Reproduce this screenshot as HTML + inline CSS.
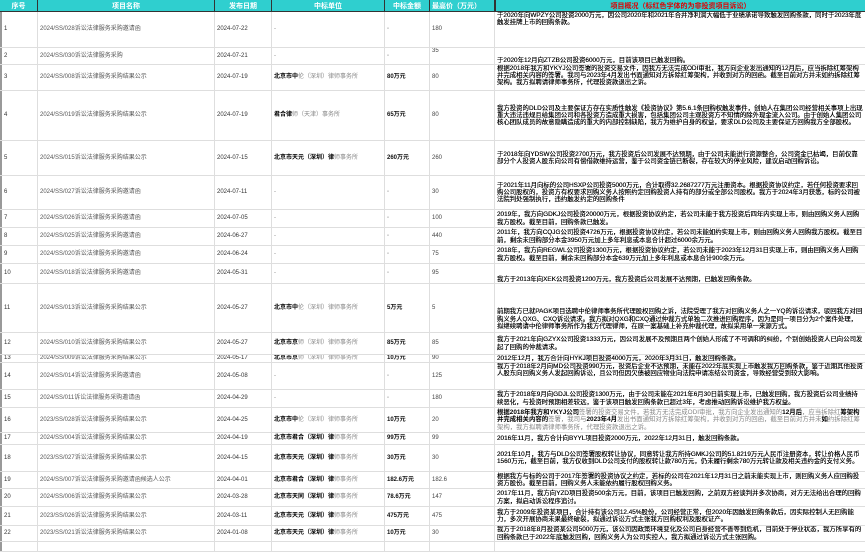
<!DOCTYPE html>
<html><head><meta charset="utf-8">
<style>
*{margin:0;padding:0;box-sizing:border-box}
body{width:865px;height:545px;background:#fff;overflow:hidden;position:relative;font-family:"Liberation Sans","Noto Sans CJK SC",sans-serif;font-size:6px;color:#222}
.r{position:absolute;left:0;width:865px;border-bottom:1px solid #dedede}
.c{position:absolute;top:0;bottom:0;display:flex;align-items:center;padding-left:2px;border-right:1px solid #dedede;overflow:hidden;white-space:nowrap;line-height:7px}
.c0{left:0;width:38px;border-left:2px solid #999;color:#333}
.c1{left:38px;width:177px;color:#555}
.c2{left:215px;width:57px;color:#333}
.c3{left:272px;width:113px;color:#888}
.c4{left:385px;width:45px;font-weight:bold;color:#111}
.c5{left:430px;width:65px;color:#444}
.c6{left:495px;width:370px;white-space:normal;color:#000;padding-right:2px;border-right:none;font-size:6.4px;line-height:7.2px;text-shadow:0 0 0.3px #000}
.t{align-items:flex-start}
.b{align-items:flex-end}
.k{color:#000;font-weight:bold}
.d{color:#999}
.h{position:absolute;top:0;left:0;width:865px;height:12px;background:#2fcfcf;border-bottom:1px solid #333}
.h div{position:absolute;top:0;height:12px;display:flex;align-items:center;justify-content:center;color:#fff;font-weight:bold;font-size:7px;border-right:1px solid #333}
</style></head><body>
<div class="h">
<div style="left:0;width:38px">序号</div>
<div style="left:38px;width:177px">项目名称</div>
<div style="left:215px;width:57px">发布日期</div>
<div style="left:272px;width:113px">中标单位</div>
<div style="left:385px;width:45px">中标金额</div>
<div style="left:430px;width:65px;justify-content:flex-start;padding-left:2px">最高价（万元）</div>
<div style="left:495px;width:370px;color:#e00000;border-right:none;border-left:1px solid #333">项目概况（标红色字体的为非投资项目诉讼）</div>
</div>

<div class="r" style="top:12px;height:36px">
<div class="c c0">1</div><div class="c c1">2024/SS/028诉讼法律服务采购邀请函</div><div class="c c2">2024-07-22</div><div class="c c3">-</div><div class="c c4 d">-</div><div class="c c5">180</div>
<div class="c c6 t">于2020年向WPZY公司投资2000万元，因公司2020年和2021年合并净利润大幅低于业绩承诺导致触发回购条款，同时于2023年度触发挂牌上市的回购条款。</div></div>

<div class="r" style="top:48px;height:17px">
<div class="c c0">2</div><div class="c c1">2024/SS/030诉讼法律服务采购</div><div class="c c2">2024-07-21</div><div class="c c3">-</div><div class="c c4 d">-</div><div class="c c5 t">35</div>
<div class="c c6 b">于2020年12月向ZTZB公司投资6000万元，目前该项目已触发回购。</div></div>

<div class="r" style="top:65px;height:26px">
<div class="c c0">3</div><div class="c c1">2024/SS/008诉讼法律服务采购结果公示</div><div class="c c2">2024-07-19</div><div class="c c3"><span class="k">北京市中</span>伦（深圳）律师事务所</div><div class="c c4">80万元</div><div class="c c5">80</div>
<div class="c c6 t">根据2018年我方和YKYJ公司签署的投资交易文件，因我方无法完成ODI审批，我方向企业发出通知的12月后，应当拆除红筹架构并完成相关内容的签署。我司与2023年4月发出书面通知对方拆除红筹架构，并收到对方的回函。截至目前对方并未如约拆除红筹架构。我方拟聘请律师事务所，代理投资款退出之诉。</div></div>

<div class="r" style="top:91px;height:50px">
<div class="c c0">4</div><div class="c c1">2024/SS/019诉讼法律服务采购结果公示</div><div class="c c2">2024-07-19</div><div class="c c3"><span class="k">君合律</span>师（天津）事务所</div><div class="c c4">65万元</div><div class="c c5">80</div>
<div class="c c6">我方投资的DLD公司及主要保证方存在实质性触发《投资协议》第5.6.1条回购权触发事件，创始人在集团公司经营相关事项上出现重大违法违规且给集团公司和各投资方造成重大损害，包括集团公司主观投资方不知情的除外现金流入公司。由于创始人集团公司核心团队成员的故意隐瞒造成的重大的内部控制缺陷，我方为维护自身的权益，要求DLD公司及主要保证方回购我方全部股权。</div></div>

<div class="r" style="top:141px;height:35px">
<div class="c c0">5</div><div class="c c1">2024/SS/015诉讼法律服务采购结果公示</div><div class="c c2">2024-07-15</div><div class="c c3"><span class="k">北京市天元（深圳）律</span>师事务所</div><div class="c c4">260万元</div><div class="c c5">260</div>
<div class="c c6">于2018年向YDSW公司投资2700万元，我方投资后公司发展不达预期，由于公司未能进行资源整合，公司资金已枯竭，目前仅靠部分个人投资人股东向公司有偿借款维持运营，鉴于公司资金链已断裂，存在较大的停业风险，建议启动回购诉讼。</div></div>

<div class="r" style="top:176px;height:34px">
<div class="c c0">6</div><div class="c c1">2024/SS/027诉讼法律服务采购邀请函</div><div class="c c2">2024-07-11</div><div class="c c3">-</div><div class="c c4 d">-</div><div class="c c5">30</div>
<div class="c c6">于2021年11月向标的公司HSXP公司投资5000万元，合计取得32.2687277万元注册资本。根据投资协议约定，若任何投资要求回购公司股权的，投资方有权要求回购义务人按照约定回购投资人持有的部分或全部公司股权。我方于2024年3月获悉，标的公司被法院判处强制执行，违约触发约定的回购条件</div></div>

<div class="r" style="top:210px;height:18px">
<div class="c c0">7</div><div class="c c1">2024/SS/026诉讼法律服务采购邀请函</div><div class="c c2">2024-07-05</div><div class="c c3">-</div><div class="c c4 d">-</div><div class="c c5">100</div>
<div class="c c6">2019年，我方向GDKJ公司投资20000万元，根据投资协议约定，若公司未能于我方投资后四年内实现上市，则由回购义务人回购我方股权。截至目前，回购条款已触发。</div></div>

<div class="r" style="top:228px;height:18px">
<div class="c c0">8</div><div class="c c1">2024/SS/025诉讼法律服务采购邀请函</div><div class="c c2">2024-06-27</div><div class="c c3">-</div><div class="c c4 d">-</div><div class="c c5">440</div>
<div class="c c6">2011年，我方向CQJG公司投资4726万元，根据投资协议约定，若公司未能如约实现上市，则由回购义务人回购我方股权。截至目前，剩余未回购部分本金3950万元加上多年利息或本息合计超过6000余万元。</div></div>

<div class="r" style="top:246px;height:18px">
<div class="c c0">9</div><div class="c c1">2024/SS/020诉讼法律服务采购邀请函</div><div class="c c2">2024-06-24</div><div class="c c3">-</div><div class="c c4 d">-</div><div class="c c5">75</div>
<div class="c c6">2018年，我方向REGWL公司投资1300万元，根据投资协议约定，若公司未能于2023年12月31日实现上市，则由回购义务人回购我方股权。截至目前，剩余未回购部分本金639万元加上多年利息或本息合计900余万元。</div></div>

<div class="r" style="top:264px;height:20px">
<div class="c c0">10</div><div class="c c1">2024/SS/018诉讼法律服务采购邀请函</div><div class="c c2">2024-05-31</div><div class="c c3">-</div><div class="c c4 d">-</div><div class="c c5">95</div>
<div class="c c6 b">我方于2013年向XEK公司投资1200万元，我方投资后公司发展不达预期，已触发回购条款。</div></div>

<div class="r" style="top:284px;height:49px">
<div class="c c0">11</div><div class="c c1">2024/SS/013诉讼法律服务采购结果公示</div><div class="c c2">2024-05-27</div><div class="c c3"><span class="k">北京市中</span>伦（深圳）律师事务所</div><div class="c c4">5万元</div><div class="c c5">5</div>
<div class="c c6 b" style="padding-bottom:2px">前期我方已就PAGK项目选聘中伦律师事务所代理股权回购之诉，法院受理了我方对回购义务人之一YQ的诉讼请求，驳回我方对回购义务人QXG、CXQ诉讼请求。我方拟对QXG和CXQ通过仲裁方式单独二次推进回购程序，因为是同一项目分为2个案件处理，拟继续聘请中伦律师事务所作为我方代理律师，在原一案基础上补充仲裁代理，故拟采用单一来源方式。</div></div>

<div class="r" style="top:333px;height:22px">
<div class="c c0">12</div><div class="c c1">2024/SS/010诉讼法律服务采购结果公示</div><div class="c c2">2024-05-27</div><div class="c c3"><span class="k">北京市京</span>师（深圳）律师事务所</div><div class="c c4">85万元</div><div class="c c5">85</div>
<div class="c c6">我方于2021年向GZYX公司投资1333万元，因公司发展不及预期且两个创始人形成了不可调和的纠纷，个别创始投资人已向公司发起了回购的仲裁请求。</div></div>

<div class="r" style="top:355px;height:8px">
<div class="c c0">13</div><div class="c c1">2024/SS/009诉讼法律服务采购结果公示</div><div class="c c2">2024-05-17</div><div class="c c3"><span class="k">北京市京</span>师（深圳）律师事务所</div><div class="c c4">10万元</div><div class="c c5">90</div>
<div class="c c6">2012年12月，我方合计向HYKJ项目投资4000万元，2020年3月31日，触发回购条款。</div></div>

<div class="r" style="top:363px;height:27px">
<div class="c c0">14</div><div class="c c1">2024/SS/014诉讼法律服务采购邀请函</div><div class="c c2">2024-05-08</div><div class="c c3">-</div><div class="c c4 d">-</div><div class="c c5">125</div>
<div class="c c6 t">我方于2018年2月向MD公司投资990万元，投资后企业不达预期，未能在2022年底实现上市触发我方回购条款，鉴于近期其他投资人股东向回购义务人发起回购诉讼，且公司但因欠债被回应物业向法院申请冻结公司资金，导致经营受到较大影响。</div></div>

<div class="r" style="top:390px;height:18px">
<div class="c c0">15</div><div class="c c1">2024/SS/011诉讼法律服务采购邀请函</div><div class="c c2">2024-04-29</div><div class="c c3">-</div><div class="c c4 d">-</div><div class="c c5">180</div>
<div class="c c6">我方于2018年9月向GDJL公司投资1300万元，由于公司未能在2021年6月30日前实现上市，已触发回购，我方投资后公司业绩持续恶化，与投资时预期相差较远，鉴于该项目触发回购条款已超过3年，考虑推动回购诉讼维护我方权益。</div></div>

<div class="r" style="top:408px;height:25px">
<div class="c c0">16</div><div class="c c1">2023/SS/028诉讼法律服务采购结果公示</div><div class="c c2">2024-04-25</div><div class="c c3"><span class="k">北京市中</span>伦（深圳）律师事务所</div><div class="c c4">10万元</div><div class="c c5">20</div>
<div class="c c6" style="color:#888;text-shadow:none"><span><b style="color:#000">根据2018年我方和YKYJ公司</b>签署的投资交易文件，若我方无法完成ODI审批，我方向企业发出通知的<b style="color:#000">12月后</b>，应当拆除红<b style="color:#000">筹架构并完成相关内容的</b>签署，我司与<b style="color:#000">2023年4月</b>发出书面通知对方拆除红筹架构，并收到对方的回函，截至目前对方并未<b style="color:#000">如</b>约拆除红筹架构，我方拟聘请律师事务所，代理投资款退出之诉。</span></div></div>

<div class="r" style="top:433px;height:12px">
<div class="c c0">17</div><div class="c c1">2024/SS/004诉讼法律服务采购结果公示</div><div class="c c2">2024-04-19</div><div class="c c3"><span class="k">北京市君合（深圳）律</span>师事务所</div><div class="c c4">99万元</div><div class="c c5">99</div>
<div class="c c6">2016年11月，我方合计向BYYL项目投资2000万元，2022年12月31日，触发回购条款。</div></div>

<div class="r" style="top:445px;height:27px">
<div class="c c0">18</div><div class="c c1">2023/SS/027诉讼法律服务采购结果公示</div><div class="c c2">2024-04-15</div><div class="c c3"><span class="k">北京市天元（深圳）律</span>师事务所</div><div class="c c4">30万元</div><div class="c c5">30</div>
<div class="c c6">2021年10月，我方与DLD公司签署股权转让协议，同意转让我方所持GMKJ公司的51.8219万元人民币注册资本，转让价格人民币1560万元，截至目前，我方仅收到DLD公司支付的股权转让款780万元，仍未履行剩余780万元转让款及相关违约金的支付义务。</div></div>

<div class="r" style="top:472px;height:17px">
<div class="c c0">19</div><div class="c c1">2024/SS/007诉讼法律服务采购邀请函候选人公示</div><div class="c c2">2024-04-01</div><div class="c c3"><span class="k">北京市君合（深圳）律</span>师事务所</div><div class="c c4">182.6万元</div><div class="c c5">182.6</div>
<div class="c c6">根据我方与标的公司于2017年签署的投资协议之约定，若标的公司在2021年12月31日之前未能实现上市，则回购义务人应回购投资方股份。截至目前，回购义务人未能依约履行股权回购义务。</div></div>

<div class="r" style="top:489px;height:18px">
<div class="c c0">20</div><div class="c c1">2024/SS/006诉讼法律服务采购结果公示</div><div class="c c2">2024-03-28</div><div class="c c3"><span class="k">北京市天同（深圳）律</span>师事务所</div><div class="c c4">78.6万元</div><div class="c c5">147</div>
<div class="c c6">2017年11月，我方向YZD项目投资500余万元，目前，该项目已触发回购，之前双方经谈判并多次协商，对方无法给出合理的回购方案，拟启动诉讼程序追讨。</div></div>

<div class="r" style="top:507px;height:19px">
<div class="c c0">21</div><div class="c c1">2023/SS/026诉讼法律服务采购结果公示</div><div class="c c2">2024-03-11</div><div class="c c3"><span class="k">北京市天元（深圳）律</span>师事务所</div><div class="c c4">475万元</div><div class="c c5">475</div>
<div class="c c6">我方于2009年投资某项目，合计持有该公司12.45%股份，公司经营正常，但2020年因触发回购条款后，因实际控制人无回购能力，多次开展协商未果最终破裂，拟通过诉讼方式主张我方回购权利及股权证产。</div></div>

<div class="r" style="top:526px;height:16px">
<div class="c c0">22</div><div class="c c1">2023/SS/021诉讼法律服务采购结果公示</div><div class="c c2">2024-01-08</div><div class="c c3"><span class="k">北京市天元（深圳）律</span>师事务所</div><div class="c c4">10万元</div><div class="c c5">30</div>
<div class="c c6">我方于2018年8月投资某公司5000万元，该公司因政策环境变化及公司自身经营不善等到危机，目前处于停业状态，我方所享有的回购条款已于2022年底触发回购，回购义务人为公司实控人，我方拟通过诉讼方式主张回购。</div></div>

<div class="r" style="top:542px;height:10px">
<div class="c c0"></div><div class="c c1"></div><div class="c c2"></div><div class="c c3"></div><div class="c c4"></div><div class="c c5"></div><div class="c c6"></div></div>
</body></html>
